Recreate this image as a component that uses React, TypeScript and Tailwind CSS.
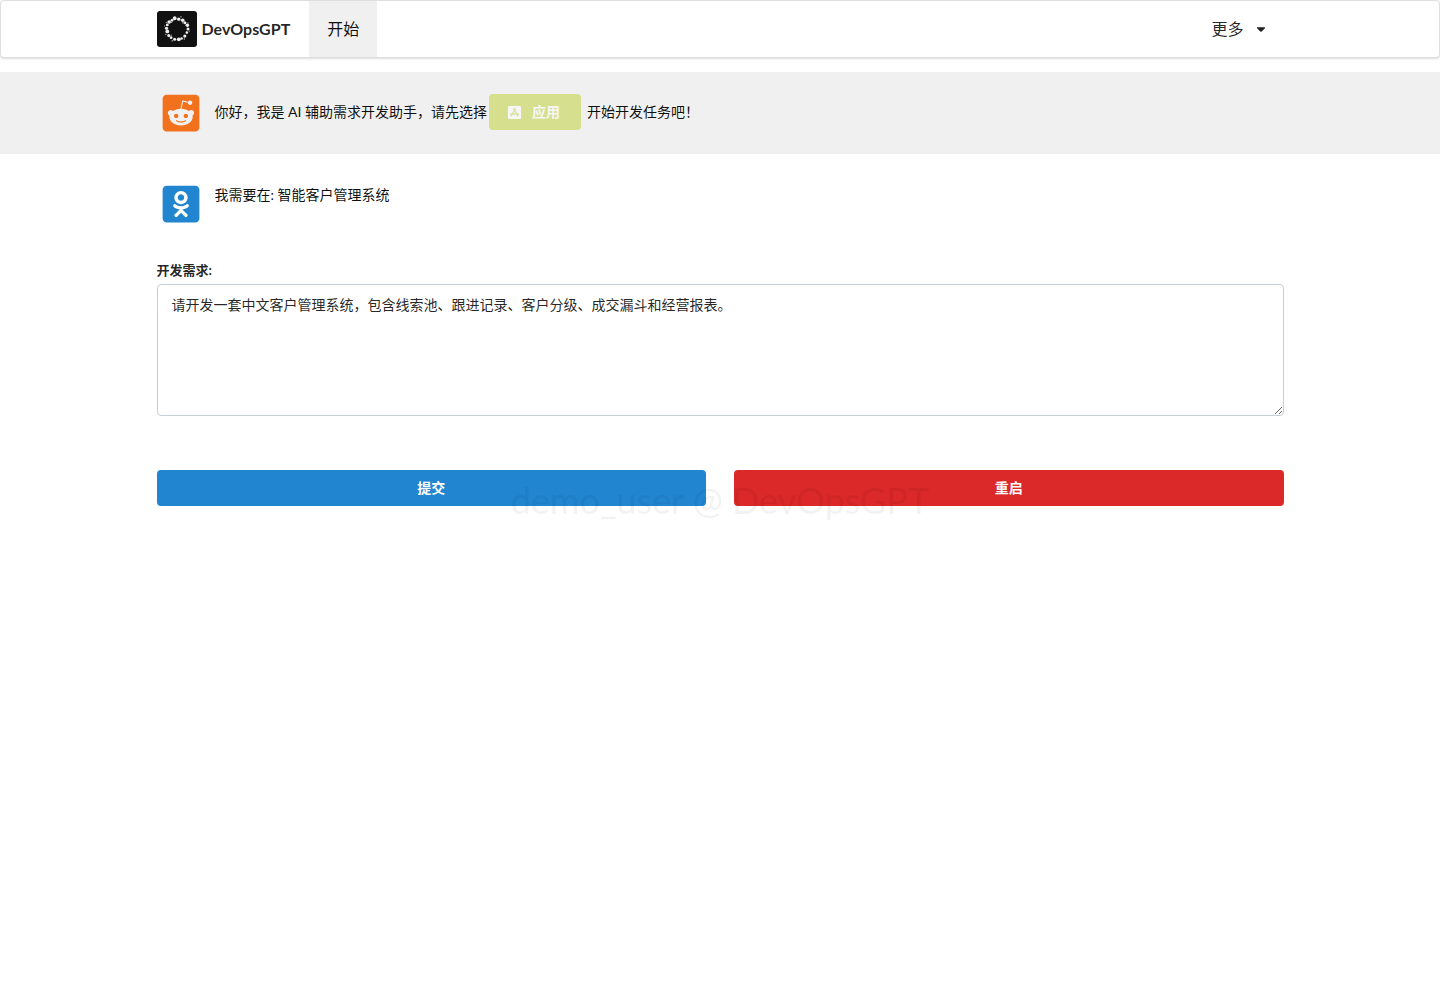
import React, { useState } from "react";
import {
  FaAppStoreIos,
  FaCaretDown,
  FaOdnoklassnikiSquare,
  FaRedditSquare,
} from "react-icons/fa";

const USER_NAME = "demo_user";
const PRODUCT = "DevOpsGPT";

// Ring of the logo: angle in degrees, distance from the centre, dot radius
const DOTS = [
  [0, 11, 1.5], [20, 10.5, 1.3], [42, 10.5, 1.6], [64, 10.5, 1.3], [80, 10.5, 1.9],
  [103, 10.5, 1.5], [124, 10.5, 1.4], [142, 10.5, 1.5], [166, 10, 1.9], [184, 10.5, 1.6],
  [203, 10.5, 1.4], [222, 10.5, 1.8], [240, 10, 1.4], [258, 11, 1.9], [280, 10, 1.7],
  [303, 10.5, 1.8], [322, 10, 1.5], [340, 11, 1.8],
  [10, 12.5, 0.7], [54, 12.5, 0.8], [112, 12.8, 0.8], [133, 8.5, 0.7], [154, 12.5, 0.8],
  [194, 12.8, 0.7], [212, 12.5, 0.7], [231, 8.5, 0.7], [288, 12.8, 0.8], [312, 8.5, 0.7],
  [331, 12.5, 0.8],
];

const Logo = () => (
  <svg viewBox="0 0 40 36" className="w-10 h-9 shrink-0" aria-hidden="true">
    <rect width="40" height="36" rx="3" fill="#111" />
    {DOTS.map(([angle, distance, r]) => {
      const rad = (angle * Math.PI) / 180;
      return (
        <circle
          key={angle}
          cx={20 + distance * Math.cos(rad)}
          cy={18 + distance * Math.sin(rad)}
          r={r}
          fill={r < 1 ? "#999" : "#eee"}
        />
      );
    })}
  </svg>
);

const Container = ({ children, className = "" }: { children: React.ReactNode; className?: string }) => (
  <div className={`mx-auto w-full max-w-[1127px] ${className}`}>{children}</div>
);

const NavBar = () => (
  <nav className="rounded border border-[#dededf] bg-white text-base shadow-[0_1px_2px_0_rgba(34,36,38,0.15)]">
    <Container className="flex h-14 items-stretch">
      <a href="#home" className="flex items-center gap-[5px] pr-[19px] font-bold">
        <Logo />
        {PRODUCT}
      </a>
      <a href="#start" className="flex items-center bg-[#f0f0f0] px-[18px] text-black/95">
        开始
      </a>
      <button type="button" className="ml-auto flex items-center gap-2.5 px-4">
        更多
        <FaCaretDown className="size-3.5" />
      </button>
    </Container>
  </nav>
);

export default function App() {
  const [requirement, setRequirement] = useState(
    "请开发一套中文客户管理系统，包含线索池、跟进记录、客户分级、成交漏斗和经营报表。"
  );

  return (
    <div
      lang="zh-CN"
      className="font-[Lato,'Noto_Sans_CJK_SC',sans-serif] text-sm leading-5 text-black/87"
    >
      <NavBar />

      <main>
        {/* Assistant greeting */}
        <section className="mt-3.5 bg-[#f0f0f0]">
          <Container className="flex gap-[13px] px-[3px] pt-5 pb-5">
            <FaRedditSquare className="size-[42px] shrink-0 text-[#f2711c]" />
            <div className="flex items-center self-start pt-0.5 text-black/95">
              你好，我是 AI 辅助需求开发助手，请先选择
              <button
                type="button"
                disabled
                className="mr-1.5 ml-0.5 flex h-9 items-center gap-2.5 rounded bg-[#b5cc18] pr-[21px] pl-[18px] font-bold text-white opacity-45"
              >
                <FaAppStoreIos className="size-[15px]" />
                应用
              </button>
              开始开发任务吧！
            </div>
          </Container>
        </section>

        {/* User reply */}
        <section>
          <Container className="flex gap-[13px] px-[3px] pt-[29px] pb-5">
            <FaOdnoklassnikiSquare className="size-[42px] shrink-0 text-[#2185d0]" />
            <p className="pt-0.5 text-black/95">我需要在: 智能客户管理系统</p>
          </Container>
        </section>

        <Container>
          <form onSubmit={(e) => e.preventDefault()} className="pt-[15px]">
            <label htmlFor="requirement" className="block text-[13px] font-bold">
              开发需求:
            </label>
            <textarea
              id="requirement"
              value={requirement}
              onChange={(e) => setRequirement(e.target.value)}
              className="mt-1 block h-[132px] w-full resize-y rounded border border-[#c5d0d6] bg-white px-3.5 py-2.5 outline-none"
            />
            <div className="mt-[54px] grid grid-cols-2 gap-7">
              <button type="submit" className="h-9 rounded bg-[#2185d0] font-bold text-white">
                提交
              </button>
              <button type="reset" className="h-9 rounded bg-[#db2828] font-bold text-white">
                重启
              </button>
            </div>
          </form>
        </Container>
      </main>

      {/* Watermark over the whole window */}
      <div className="pointer-events-none fixed inset-0 z-10 flex items-center justify-center text-4xl leading-none text-black/5">
        {USER_NAME} @ {PRODUCT}
      </div>
    </div>
  );
}
